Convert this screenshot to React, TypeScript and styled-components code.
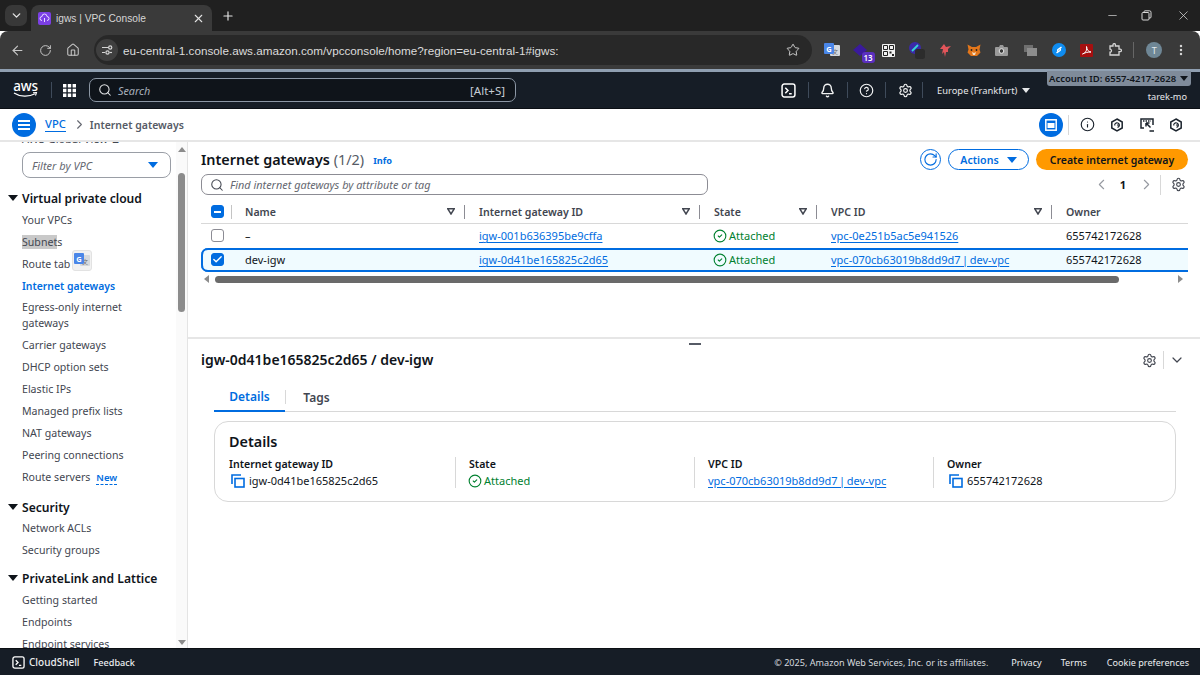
import React from "react";
import styled, { createGlobalStyle } from "styled-components";
import { ArrowLeft, RotateCw, House, Star, X, Plus, ChevronDown, ChevronLeft, ChevronRight, Minus, Search, Bell, CircleHelp, Settings, Info, EllipsisVertical, Check, CircleCheck } from "lucide-react";

const Global = createGlobalStyle`
  html, body { margin: 0; padding: 0; background: #fff; }
  * { box-sizing: border-box; }
  body { font-family: "Noto Sans", "Open Sans", sans-serif; }
`;

const Page = styled.div`
  width: 1200px; height: 675px; overflow: hidden; display: flex; flex-direction: column; color: #0f141a; position: relative;
`;

/* ---------- browser chrome ---------- */
const TabStrip = styled.div`
  height: 31px; background: #202020; display: flex; align-items: flex-end; padding-left: 5px; flex: none;
`;
const TabMenu = styled.div`
  width: 22px; height: 21px; margin: 0 4px 5px 0; border-radius: 7px; background: #383838; color: #e3e3e3;
  display: flex; align-items: center; justify-content: center;
`;
const Tab = styled.div`
  width: 181px; height: 26px; background: #3a3a3a; border-radius: 8px 8px 0 0; display: flex; align-items: center; padding: 0 7px;
  color: #d6d6d6; font-family: "Liberation Sans", sans-serif; font-size: 10.2px; gap: 5px;
`;
const TabTitle = styled.span` flex: 1; white-space: nowrap; `;
const NewTab = styled.div`
  margin: 0 0 5px 9px; width: 16px; height: 20px; display: flex; align-items: center; color: #e3e3e3;
`;
const WindowControls = styled.div`
  margin-left: auto; display: flex; height: 31px; align-items: center; color: #d8d8d8;
`;
const WindowButton = styled.div<{ $w: number }>`
  width: ${p => p.$w}px; display: flex; justify-content: center; align-items: center;
`;
const Toolbar = styled.div`
  height: 38px; background: #3a3a3a; display: flex; align-items: center; padding-left: 3px; flex: none; border-radius: 8px 8px 0 0;
`;
const NavButton = styled.div`
  width: 28px; display: flex; justify-content: center; color: #c7c7c7;
`;
const Omnibox = styled.div`
  margin-left: 7px; width: 718px; height: 30px; background: #282828; border-radius: 15px; display: flex; align-items: center; padding: 0 12px 0 2px;
`;
const SiteInfo = styled.div`
  width: 22px; height: 22px; border-radius: 50%; background: #3f3f3f; display: flex; align-items: center; justify-content: center; margin-right: 5px;
`;
const Url = styled.span`
  flex: 1; color: #dcdcdc; font-size: 11.7px; white-space: nowrap; font-family: "Liberation Sans", sans-serif;
`;
const Extensions = styled.div`
  margin-left: 6px; display: flex; align-items: center;
`;
const Ext = styled.div`
  width: 28.3px; height: 28px; display: flex; align-items: center; justify-content: center; position: relative;
`;
const ExtBadge = styled.span`
  position: absolute; right: 0; bottom: 1px; width: 13px; height: 11px; border-radius: 3px; background: #5b2fc0; color: #fff; font-size: 8px;
  line-height: 11px; text-align: center; font-weight: 600;
`;
const ExtSep = styled.div`
  width: 1px; height: 16px; background: #666; margin: 0 12px 0 4px;
`;
const Avatar = styled.div`
  width: 16px; height: 16px; border-radius: 50%; background: #6f8796; color: #e4eaee; font-size: 9px; display: flex; align-items: center; justify-content: center; margin-right: 12px;
`;
const LoadLine = styled.div` height: 3px; background: #8f9fb1; flex: none; `;

/* ---------- AWS header ---------- */
const AwsHeader = styled.header`
  height: 37px; background: #161d26; display: flex; align-items: center; flex: none; color: #fff; padding-left: 13px; position: relative; border-bottom: 1px solid #0b0f14;
`;
const AwsLogo = styled.div`
  width: 25px; display: flex; flex-direction: column; align-items: center; font-size: 13.5px; line-height: 12px; color: #fff; font-weight: 500; letter-spacing: -0.2px; margin-top: -2px;
`;
const HeadSep = styled.div<{ $m?: string }>`
  width: 1px; height: 16px; background: #3f4b5b; margin: ${p => p.$m ?? "0"};
`;
const AppGrid = styled.div`
  width: 18px; margin-left: 8px; display: flex; justify-content: center;
`;
const GlobalSearch = styled.div`
  width: 427px; height: 24px; margin-left: 11px; background: #0f141a; border: 1px solid #8c97a5; border-radius: 7px; display: flex; align-items: center; padding: 0 10px 0 8px; gap: 6px;
`;
const SearchHint = styled.span`
  flex: 1; font-style: italic; font-size: 10.8px; color: #a8b0ba;
`;
const Shortcut = styled.span` font-size: 11.5px; color: #c6ccd4; `;
const HeadIcon = styled.div<{ $m?: number }>`
  width: 18px; display: flex; justify-content: center; color: #f2f3f3; margin-left: ${p => p.$m ?? 0}px;
`;
const Region = styled.span`
  font-size: 9.4px; color: #e6e8ea; margin-left: 14px; white-space: nowrap; display: flex; align-items: center; gap: 5px;
`;
const Caret = styled.i<{ $c?: string; $s?: number }>`
  display: inline-block; width: 0; height: 0; border-left: ${p => p.$s ?? 4}px solid transparent; border-right: ${p => p.$s ?? 4}px solid transparent;
  border-top: ${p => (p.$s ?? 4) + 1}px solid ${p => p.$c ?? "currentColor"};
`;
const AccountBadge = styled.div`
  position: absolute; left: 1047px; top: -1px; width: 144px; height: 15px; background: #7f8b9a; color: #10151b; border-radius: 0 0 3px 3px;
  font-size: 9.5px; font-weight: 600; display: flex; align-items: center; padding-left: 2px; gap: 4px; white-space: nowrap;
`;
const UserName = styled.span`
  position: absolute; right: 13px; bottom: 5px; font-size: 9.2px; color: #e6e8ea;
`;

/* ---------- breadcrumb ---------- */
const Crumbs = styled.div`
  height: 33px; display: flex; align-items: center; padding-left: 12px; flex: none; border-bottom: 2px solid #e6e6e6; background: #fff;
`;
const RoundBlue = styled.div`
  width: 24px; height: 24px; border-radius: 50%; background: #006ce0; display: flex; align-items: center; justify-content: center; flex: none;
`;
const CrumbLink = styled.a`
  color: #006ce0; font-size: 11.2px; margin-left: 9px; border-bottom: 1px solid #006ce0; line-height: 14px; font-weight: 500;
`;
const CrumbChevron = styled.span`
  margin-left: 6px; display: flex; color: #656871;
`;
const CrumbCurrent = styled.span`
  color: #565b66; font-size: 10.5px; font-weight: 600; margin-left: 3px;
`;
const CrumbTools = styled.div`
  margin-left: auto; display: flex; align-items: center; padding-right: 9px;
`;
const ToolSep = styled.div`
  width: 1px; height: 20px; background: #d8d8d8; margin: 0 4px 0 5px;
`;
const ToolIcon = styled.div`
  width: 29.5px; display: flex; justify-content: center; color: #1b232d;
`;

/* ---------- body ---------- */
const Body = styled.div`
  flex: 1; min-height: 0; display: flex;
`;
const Sidebar = styled.aside`
  width: 188px; flex: none; display: flex; border-right: 1px solid #e4e4e4; overflow: hidden; background: #fff;
`;
const SideNav = styled.nav`
  width: 176px; flex: none; padding-left: 22px; height: 100%; overflow: hidden; position: relative;
`;
const ClippedTitle = styled.div`
  margin-top: -11px; height: 17px; font-size: 11px; color: #424650; line-height: 15px; white-space: nowrap;
`;
const FilterSelect = styled.div`
  width: 149px; height: 26px; margin-top: 4px; border: 1px solid #9a9ea6; border-radius: 8px; display: flex; align-items: center; justify-content: space-between; padding: 0 12px 0 9px;
  font-size: 11px; font-style: italic; color: #656871; background: #fff;
`;
const SectionTitle = styled.div<{ $top: number }>`
  position: relative; margin-top: ${p => p.$top}px; height: 21px; line-height: 21px; font-size: 12.1px; font-weight: 600; color: #0f141a; white-space: nowrap;
  & > i { position: absolute; left: -14px; top: 7px; }
`;
const NavItem = styled.div<{ $active?: boolean }>`
  font-size: ${p => p.$active ? "10.4px" : "10.6px"}; line-height: 16px; padding: 2.95px 0; color: ${p => p.$active ? "#006ce0" : "#424650"}; font-weight: ${p => p.$active ? 600 : 400}; position: relative; white-space: nowrap;
`;
const Selected = styled.span` background: #c9c9c9; `;
const NewTag = styled.span`
  color: #006ce0; font-size: 9.5px; font-weight: 600; margin-left: 6px; border-bottom: 1px dashed #006ce0;
`;
const TranslatePop = styled.div`
  position: absolute; left: 50px; top: -3px; width: 20px; height: 21px; border-radius: 3px; background: #f1f1f1; border: 1px solid #e2e2e2; display: flex; align-items: center; justify-content: center;
`;
const ScrollTrack = styled.div`
  width: 11px; flex: none; background: #fafafa; display: flex; flex-direction: column; align-items: center; position: relative; padding-top: 31px;
`;
const ScrollThumb = styled.div`
  width: 7px; height: 139px; background: #8c8c8c; border-radius: 4px;
`;
const ScrollUp = styled.i`
  position: absolute; top: 5px; width: 0; height: 0; border-left: 4px solid transparent; border-right: 4px solid transparent; border-bottom: 5px solid #8c8c8c;
`;
const ScrollDown = styled.i`
  position: absolute; bottom: 3px; width: 0; height: 0; border-left: 4px solid transparent; border-right: 4px solid transparent; border-top: 5px solid #8c8c8c;
`;

const Main = styled.main`
  flex: 1; min-width: 0; display: flex; flex-direction: column;
`;
const TopPane = styled.section`
  height: 197px; flex: none; padding: 7px 12px 0 13px; border-bottom: 2px solid #e6e6e6; position: relative;
`;
const TitleRow = styled.div`
  display: flex; align-items: center; height: 21px;
`;
const PageTitle = styled.h1<{ $size?: number }>`
  margin: 0 0 1px; font-size: ${p => p.$size ?? 14.4}px; font-weight: 600; color: #0f141a; white-space: nowrap;
`;
const Count = styled.span` font-weight: 400; color: #565b66; `;
const InfoLink = styled.a`
  font-size: 9.2px; font-weight: 700; color: #006ce0; margin-left: 9px; margin-top: 2px;
`;
const TitleActions = styled.div`
  margin-left: auto; display: flex; align-items: center; gap: 7px;
`;
const CircleBtn = styled.div`
  width: 21px; height: 21px; border: 1px solid #006ce0; border-radius: 50%; display: flex; align-items: center; justify-content: center; color: #006ce0;
`;
const OutlineBtn = styled.div`
  width: 81px; height: 21px; border: 1px solid #006ce0; border-radius: 11px; display: flex; align-items: center; justify-content: center; gap: 8px; color: #006ce0; font-size: 10.6px; font-weight: 600;
`;
const PrimaryBtn = styled.div`
  width: 152px; height: 21px; border-radius: 11px; background: #ff9900; display: flex; align-items: center; justify-content: center; color: #0f141a; font-size: 10.5px; font-weight: 600; white-space: nowrap;
`;
const FilterRow = styled.div`
  display: flex; align-items: center; margin-top: 4px; height: 21px;
`;
const TableSearch = styled.div`
  width: 507px; height: 21px; border: 1px solid #8c8c94; border-radius: 7px; display: flex; align-items: center; padding-left: 8px; gap: 6px; background: #fff;
`;
const TableHint = styled.span`
  font-size: 10.9px; font-style: italic; color: #656871; white-space: nowrap;
`;
const Pager = styled.div`
  margin-left: auto; display: flex; align-items: center; color: #969aa1; padding-right: 2px;
`;
const PageNum = styled.span`
  font-size: 11px; font-weight: 700; color: #0f141a; margin: 0 12px 0 10px;
`;
const PagerSep = styled.div`
  width: 1px; height: 20px; background: #d8d8d8; margin: 0 10px 0 5px;
`;
const PagerGear = styled.span` display: flex; color: #424650; `;

const TableGrid = styled.div`
  margin-top: 5px; overflow: hidden;
`;
const cols = "44px 234px 235px 117px 235px 122px";
const HeadRow = styled.div`
  display: grid; grid-template-columns: ${cols}; height: 24px; align-items: center; border-bottom: 1px solid #d8d8d8;
  font-size: 10.6px; font-weight: 600; color: #424650;
`;
const HeadCell = styled.div`
  display: flex; align-items: center; padding-right: 15px; white-space: nowrap;
`;
const CheckCell = styled.div`
  display: flex; align-items: center; padding-left: 10px;
`;
const Sort = styled.div`
  margin-left: auto; width: 8px; height: 7px; margin-right: 9px; display: flex;
`;
const ColSep = styled.div`
  width: 1px; height: 14px; background: #8c8c94; margin-right: -1px;
`;
const CheckSep = styled(ColSep)`
  margin-left: 7px; background: #c4c4c4;
`;
const Row = styled.div<{ $selected?: boolean }>`
  display: grid; grid-template-columns: ${cols}; height: 24px; align-items: center; font-size: 11px; color: #0f141a; white-space: nowrap; padding-bottom: 1px;
  background: ${p => p.$selected ? "#f0fbff" : "#fff"};
  border-radius: ${p => p.$selected ? "7px 0 0 7px" : "0"};
  box-shadow: ${p => p.$selected ? "inset 2px 0 0 #006ce0, inset 0 2px 0 #006ce0, inset 0 -2px 0 #006ce0" : "none"};
`;
const Box = styled.div<{ $on?: boolean }>`
  width: 13px; height: 13px; border-radius: 3px; background: ${p => p.$on ? "#006ce0" : "#fff"}; border: 1px solid ${p => p.$on ? "#006ce0" : "#8c8c94"};
  display: flex; align-items: center; justify-content: center; color: #fff; flex: none;
`;
const Dash = styled.i` width: 7px; height: 2px; background: #fff; display: block; `;
const Link = styled.a`
  color: #006ce0; text-decoration: underline; text-underline-offset: 1.5px; font-size: 11px; white-space: nowrap; word-spacing: -1.3px;
`;
const Status = styled.span`
  display: inline-flex; align-items: center; gap: 2px; color: #00802f; font-size: 11px; margin-left: -1px;
`;
const HScroll = styled.div`
  display: flex; align-items: center; height: 10px; margin-top: 2px;
`;
const HArrow = styled.i<{ $right?: boolean }>`
  width: 0; height: 0; border-top: 4px solid transparent; border-bottom: 4px solid transparent;
  ${p => p.$right ? "border-left: 5px solid #8c8c8c; margin-left: 59px;" : "border-right: 5px solid #8c8c8c; margin-left: 3px;"}
`;
const HThumb = styled.div`
  width: 904px; height: 7px; background: #6a6a6a; border-radius: 4px; margin-left: 6px;
`;
const Handle = styled.div`
  position: absolute; left: 501px; bottom: -8px; width: 12px; height: 2px; background: #565b66;
`;

const BottomPane = styled.section`
  flex: 1; padding: 9px 12px 0 13px;
`;
const PaneHead = styled.div`
  display: flex; align-items: center; height: 24px;
`;
const PaneTools = styled.div`
  margin-left: auto; display: flex; align-items: center; color: #424650; padding-right: 3px;
`;
const PaneSep = styled.div`
  width: 1px; height: 18px; background: #d8d8d8; margin: 0 5px 0 6px;
`;
const TabBar = styled.div`
  margin: 11px 0 0 13px; width: 962px; height: 29px; border-bottom: 1px solid #d8d8d8; display: flex;
`;
const DetailTab = styled.div<{ $active?: boolean }>`
  height: 29px; display: flex; align-items: center; justify-content: center; font-size: 12px; font-weight: 600; padding-bottom: 1px;
  width: ${p => p.$active ? "71px" : "61px"}; color: ${p => p.$active ? "#006ce0" : "#424650"};
  border-bottom: ${p => p.$active ? "2px solid #006ce0" : "none"};
`;
const TabDivider = styled.div`
  width: 1px; height: 14px; background: #d8d8d8; margin-top: 7px;
`;
const Card = styled.div`
  margin: 9px 0 0 13px; width: 962px; height: 81px; border: 1px solid #d8d8d8; border-radius: 14px; padding: 9px 14px 0;
`;
const CardTitle = styled.h2`
  margin: 0; font-size: 14.4px; font-weight: 600; line-height: 21px; color: #0f141a;
`;
const DetailGrid = styled.div`
  display: grid; grid-template-columns: 226px 239px 239px 1fr; margin-top: 5px;
`;
const DetailCol = styled.div<{ $first?: boolean }>`
  padding-left: ${p => p.$first ? 0 : 13}px; border-left: ${p => p.$first ? "none" : "1px solid #d8d8d8"}; height: 31px;
`;
const DetailLabel = styled.div`
  font-size: 10.6px; font-weight: 600; line-height: 15px; color: #0f141a;
`;
const DetailValue = styled.div`
  font-size: 11px; line-height: 16px; margin-top: 1px; display: flex; align-items: center; gap: 3px; color: #0f141a; white-space: nowrap;
`;
const CopyWrap = styled.span`
  display: inline-flex; margin: 0 1px 0 2px;
`;

const Footer = styled.footer`
  height: 27px; flex: none; background: #161d26; display: flex; align-items: center; padding: 0 11px 0 12px; color: #eceef0; font-size: 9.1px; border-top: 1px solid #0b0f14;
`;
const FootShell = styled.span`
  display: flex; align-items: center; gap: 4px; margin-right: 14px; font-weight: 500; font-size: 10px;
`;
const FootFeedback = styled.span` font-weight: 500; `;
const FootRight = styled.div`
  margin-left: auto; display: flex; align-items: center;
`;
const Copyright = styled.span` margin-right: 23px; color: #d5d9de; `;
const FootLink = styled.span<{ $m?: number }>` margin-left: ${p => p.$m ?? 0}px; `;

/* ---------- icons ---------- */
const TranslateIcon = ({ s = 16 }: { s?: number }) => (
  <svg width={s} height={s} viewBox="0 0 16 16">
    <rect x="6" y="3" width="10" height="11" rx="1" fill="#d6d9dd" />
    <text x="11" y="12" fontSize="6" fill="#666" textAnchor="middle" fontFamily="Noto Sans CJK SC">文</text>
    <rect x="0" y="1" width="10" height="11" rx="1" fill="#4a86e8" />
    <text x="5" y="9.5" fontSize="7.5" fontWeight="700" fill="#fff" textAnchor="middle" fontFamily="Noto Sans">G</text>
  </svg>
);
const CopyIcon = () => (
  <svg width="14" height="14" viewBox="0 0 14 14" fill="none" stroke="#006ce0" strokeWidth="1.6">
    <path d="M10 1H1v9" /><rect x="4" y="4.5" width="9" height="8.5" />
  </svg>
);
const HexDot = ({ s = 14 }: { s?: number }) => (
  <svg width={s} height={s} viewBox="0 0 14 14" fill="none" stroke="#1b232d" strokeWidth="1.5">
    <path d="M7 1l5.200 3v6L7 13l-5.200-3V4z" /><path d="M4.800 7.500A2.300 2.300 0 1 1 7.500 9.300" strokeWidth="1.200" /><path d="M7 7l2 .2" strokeWidth="1.200" />
  </svg>
);
const SortIcon = () => (
  <svg width="8" height="7" viewBox="0 0 8 7"><path d="M0.8 0.8h6.4L4 6z" fill="none" stroke="#424650" strokeWidth="1.5" /></svg>
);
const StatusIcon = () => <CircleCheck size={14} color="#00802f" strokeWidth={1.9} />;

const Attached = () => <Status><StatusIcon />Attached</Status>;

const Sec = ({ top, children }: { top: number; children: React.ReactNode }) => (
  <SectionTitle $top={top}><Caret $s={5} $c="#0f141a" />{children}</SectionTitle>
);

const Head = ({ children, last }: { children: React.ReactNode; last?: boolean }) => (
  <HeadCell>
    {children}
    {!last && <Sort><SortIcon /></Sort>}
    {!last && <ColSep />}
  </HeadCell>
);

export default function App() {
  return (
    <Page>
      <Global />
      <TabStrip>
        <TabMenu><ChevronDown size={13} strokeWidth={2.5} /></TabMenu>
        <Tab>
          <svg width="13" height="13" viewBox="0 0 13 13"><rect width="13" height="13" rx="2" fill="#7b3fe4" /><path d="M4 8.5a2 2 0 0 1 0-4 2.5 2.5 0 0 1 5 0 2 2 0 0 1 0 4M6.5 6v4" fill="none" stroke="#e8dcff" strokeWidth="1" /></svg>
          <TabTitle>igws | VPC Console</TabTitle>
          <X size={13} strokeWidth={2} color="#e3e3e3" />
        </Tab>
        <NewTab><Plus size={14} strokeWidth={2} /></NewTab>
        <WindowControls>
          <WindowButton $w={28}><Minus size={13} strokeWidth={1.3} /></WindowButton>
          <WindowButton $w={40}>
            <svg width="11" height="11" viewBox="0 0 11 11" fill="none" stroke="#d8d8d8"><rect x="1" y="2.5" width="7" height="7.5" rx="1" /><path d="M3 2.500V1.800a1 1 0 0 1 1-1h4.500a1.500 1.500 0 0 1 1.500 1.500V7a1 1 0 0 1-1 1H8" /></svg>
          </WindowButton>
          <WindowButton $w={34}><X size={15} strokeWidth={1.2} /></WindowButton>
        </WindowControls>
      </TabStrip>

      <Toolbar>
        <NavButton><ArrowLeft size={15} strokeWidth={1.8} /></NavButton>
        <NavButton><RotateCw size={13} strokeWidth={1.8} /></NavButton>
        <NavButton><House size={14} strokeWidth={1.8} /></NavButton>
        <Omnibox>
          <SiteInfo>
            <svg width="12" height="12" viewBox="0 0 12 12" fill="none" stroke="#d5d5d5" strokeWidth="1.2"><path d="M1 3.500h6M1 8.500h3" /><circle cx="9.200" cy="3.500" r="1.600" /><circle cx="6.500" cy="8.500" r="1.600" /><path d="M8.500 8.500H11" /></svg>
          </SiteInfo>
          <Url>eu-central-1.console.aws.amazon.com/vpcconsole/home?region=eu-central-1#igws:</Url>
          <Star size={14} color="#d5d5d5" strokeWidth={1.6} />
        </Omnibox>
        <Extensions>
          <Ext><TranslateIcon s={16} /></Ext>
          <Ext>
            <svg width="14" height="12" viewBox="0 0 14 12"><path d="M7 0l7 6-7 6-7-6z" fill="#3a1a9c" /></svg>
            <ExtBadge>13</ExtBadge>
          </Ext>
          <Ext>
            <svg width="13" height="13" viewBox="0 0 13 13"><rect width="13" height="13" rx="1" fill="#f1f1f1" /><path d="M1.500 1.500h4v4h-4zM7.500 1.500h4v4h-4zM1.500 7.500h4v4h-4z" fill="none" stroke="#222" /><path d="M7.500 7.500h2v2h-2zM10 10h2v2h-2z" fill="#222" /></svg>
          </Ext>
          <Ext>
            <svg width="20" height="20" viewBox="0 0 20 20"><circle cx="8" cy="8" r="6" fill="#3b2aa8" /><path d="M5 11l6-6" stroke="#35d6d6" strokeWidth="1.8" /><rect x="8" y="9" width="10" height="10" rx="2.500" fill="#2c2c2c" /></svg>
          </Ext>
          <Ext>
            <svg width="13" height="15" viewBox="0 0 13 15"><path d="M5 1l2 3 5-1-3 3 0 3-2 0-1 5-1-5-2 2 1-5-3 0z" fill="#e2555a" /></svg>
          </Ext>
          <Ext>
            <svg width="14" height="13" viewBox="0 0 14 13"><path d="M0.500 0.500L5 3h4l4.500-2.500-1 5 1 3L10 12H4L.5 8.500l1-3z" fill="#e2761b" /><path d="M5 8l2 1 2-1-1 3H6z" fill="#f5e1c9" /><circle cx="4.500" cy="6" r=".9" fill="#222" /><circle cx="9.500" cy="6" r=".9" fill="#222" /></svg>
          </Ext>
          <Ext>
            <svg width="13" height="11" viewBox="0 0 13 11"><path d="M1 2h3l1-2h3l1 2h3a1 1 0 0 1 1 1v7a1 1 0 0 1-1 1H1a1 1 0 0 1-1-1V3a1 1 0 0 1 1-1z" fill="#9a9a9a" /><circle cx="6.500" cy="6" r="2.300" fill="#3a3a3a" stroke="#e8e8e8" /></svg>
          </Ext>
          <Ext>
            <svg width="13" height="11" viewBox="0 0 13 11"><rect width="9" height="7" y="0" fill="#6f6f6f" /><rect x="3" y="3" width="10" height="8" fill="#8d8d8d" /></svg>
          </Ext>
          <Ext>
            <svg width="14" height="14" viewBox="0 0 14 14"><circle cx="7" cy="7" r="7" fill="#0f8cf0" /><path d="M9.500 4.200L6 6.500a1 1 0 0 0 0 1.500M4.500 9.800L8 7.500a1 1 0 0 0 0-1.500" fill="none" stroke="#fff" strokeWidth="1.400" /></svg>
          </Ext>
          <Ext>
            <svg width="13" height="13" viewBox="0 0 13 13"><rect width="13" height="13" rx="1" fill="#a50f0f" /><path d="M2.500 10c3-1 5-4 4-7.500 0 3 2 5.500 4.500 5.500-3 0-6 .5-8.500 2z" fill="none" stroke="#fff" strokeWidth="1" /></svg>
          </Ext>
          <Ext>
            <svg width="14" height="14" viewBox="0 0 14 14" fill="none" stroke="#d5d5d5" strokeWidth="1.300"><path d="M2 3h3V1.800a1.200 1.200 0 0 1 2.400 0V3h3.600v3.200h1.200a1.200 1.200 0 0 1 0 2.400H11V12H2V9.200a1.500 1.500 0 0 0 0-3z" /></svg>
          </Ext>
          <ExtSep />
          <Avatar>T</Avatar>
          <EllipsisVertical size={14} color="#d5d5d5" strokeWidth={2.2} />
        </Extensions>
      </Toolbar>
      <LoadLine />

      <AwsHeader>
        <AwsLogo>
          aws
          <svg width="25" height="6" viewBox="0 0 25 6"><path d="M1 1c6 4 15 4 21 .8" fill="none" stroke="#fff" strokeWidth="1.200" /><path d="M20 .8l3.500-.3-1 3" fill="none" stroke="#fff" strokeWidth="1.100" /></svg>
        </AwsLogo>
        <HeadSep $m="0 0 0 13px" />
        <AppGrid>
          <svg width="13" height="13" viewBox="0 0 13 13" fill="#fff"><path d="M0 0h3.400v3.400H0zM4.800 0h3.400v3.400H4.800zM9.600 0H13v3.400H9.600zM0 4.800h3.400v3.400H0zM4.800 4.800h3.400v3.400H4.800zM9.600 4.800H13v3.400H9.600zM0 9.600h3.400V13H0zM4.800 9.600h3.400V13H4.800zM9.600 9.600H13V13H9.600z" /></svg>
        </AppGrid>
        <GlobalSearch>
          <Search size={14} color="#e6e8ea" strokeWidth={1.8} />
          <SearchHint>Search</SearchHint>
          <Shortcut>[Alt+S]</Shortcut>
        </GlobalSearch>
        <HeadIcon $m={263}>
          <svg width="15" height="15" viewBox="0 0 14 14" fill="none" stroke="#fff" strokeWidth="1.400"><rect x="1" y="1" width="12" height="12" rx="2" /><path d="M4 4.500L6.500 7 4 9.500M7.500 10H10" /></svg>
        </HeadIcon>
        <HeadSep $m="0 9px 0 11px" />
        <HeadIcon><Bell size={15} strokeWidth={2.2} /></HeadIcon>
        <HeadSep $m="0 9px 0 11px" />
        <HeadIcon><CircleHelp size={15} strokeWidth={1.9} /></HeadIcon>
        <HeadSep $m="0 10px 0 10px" />
        <HeadIcon><Settings size={15} strokeWidth={1.9} /></HeadIcon>
        <HeadSep $m="0 0 0 8px" />
        <Region>Europe (Frankfurt)<Caret /></Region>
        <AccountBadge>Account ID: 6557-4217-2628 <Caret $c="#10151b" /></AccountBadge>
        <UserName>tarek-mo</UserName>
      </AwsHeader>

      <Crumbs>
        <RoundBlue>
          <svg width="12" height="10" viewBox="0 0 12 10" stroke="#fff" strokeWidth="1.800"><path d="M0 1h12M0 5h12M0 9h12" /></svg>
        </RoundBlue>
        <CrumbLink>VPC</CrumbLink>
        <CrumbChevron><ChevronRight size={15} strokeWidth={1.8} /></CrumbChevron>
        <CrumbCurrent>Internet gateways</CrumbCurrent>
        <CrumbTools>
          <RoundBlue>
            <svg width="12" height="12" viewBox="0 0 12 12"><rect x=".8" y=".8" width="10.400" height="10.400" fill="none" stroke="#fff" strokeWidth="1.500" /><rect x="2.500" y="4" width="7" height="5" fill="#fff" /></svg>
          </RoundBlue>
          <ToolSep />
          <ToolIcon><Info size={15} strokeWidth={1.8} /></ToolIcon>
          <ToolIcon><HexDot /></ToolIcon>
          <ToolIcon>
            <svg width="14" height="14" viewBox="0 0 14 14" fill="none" stroke="#1b232d" strokeWidth="1.500"><path d="M4 10H1V1h12v6" /><path d="M3 3h8" strokeDasharray="1.500 1" /><path d="M6 5l4.500 4.500M6 5v3.500M6 5h3.500M9.500 13H14" /></svg>
          </ToolIcon>
          <ToolIcon><HexDot /></ToolIcon>
        </CrumbTools>
      </Crumbs>

      <Body>
        <Sidebar>
          <SideNav>
            <ClippedTitle>AWS Global View ⧉</ClippedTitle>
            <FilterSelect>Filter by VPC <Caret $s={5} $c="#006ce0" /></FilterSelect>
            <Sec top={10}>Virtual private cloud</Sec>
            <NavItem>Your VPCs</NavItem>
            <NavItem><Selected>Subnet</Selected>s</NavItem>
            <NavItem>Route tab<TranslatePop><TranslateIcon s={16} /></TranslatePop></NavItem>
            <NavItem $active>Internet gateways</NavItem>
            <NavItem>Egress-only internet<br />gateways</NavItem>
            <NavItem>Carrier gateways</NavItem>
            <NavItem>DHCP option sets</NavItem>
            <NavItem>Elastic IPs</NavItem>
            <NavItem>Managed prefix lists</NavItem>
            <NavItem>NAT gateways</NavItem>
            <NavItem>Peering connections</NavItem>
            <NavItem>Route servers<NewTag>New</NewTag></NavItem>
            <Sec top={8}>Security</Sec>
            <NavItem>Network ACLs</NavItem>
            <NavItem>Security groups</NavItem>
            <Sec top={7}>PrivateLink and Lattice</Sec>
            <NavItem>Getting started</NavItem>
            <NavItem>Endpoints</NavItem>
            <NavItem>Endpoint services</NavItem>
          </SideNav>
          <ScrollTrack><ScrollUp /><ScrollThumb /><ScrollDown /></ScrollTrack>
        </Sidebar>

        <Main>
          <TopPane>
            <TitleRow>
              <PageTitle>Internet gateways <Count>(1/2)</Count></PageTitle>
              <InfoLink>Info</InfoLink>
              <TitleActions>
                <CircleBtn><RotateCw size={15} strokeWidth={1.8} /></CircleBtn>
                <OutlineBtn>Actions <Caret $s={5} /></OutlineBtn>
                <PrimaryBtn>Create internet gateway</PrimaryBtn>
              </TitleActions>
            </TitleRow>
            <FilterRow>
              <TableSearch><Search size={14} color="#424650" strokeWidth={1.8} /><TableHint>Find internet gateways by attribute or tag</TableHint></TableSearch>
              <Pager>
                <ChevronLeft size={17} strokeWidth={1.6} />
                <PageNum>1</PageNum>
                <ChevronRight size={17} strokeWidth={1.6} />
                <PagerSep />
                <PagerGear><Settings size={15} strokeWidth={1.8} /></PagerGear>
              </Pager>
            </FilterRow>
            <TableGrid>
              <HeadRow>
                <CheckCell><Box $on><Dash /></Box><CheckSep /></CheckCell>
                <Head>Name</Head>
                <Head>Internet gateway ID</Head>
                <Head>State</Head>
                <Head>VPC ID</Head>
                <Head last>Owner</Head>
              </HeadRow>
              <Row>
                <CheckCell><Box /></CheckCell>
                <span>–</span>
                <Link>igw-001b636395be9cffa</Link>
                <Attached />
                <Link>vpc-0e251b5ac5e941526</Link>
                <span>655742172628</span>
              </Row>
              <Row $selected>
                <CheckCell><Box $on><Check size={11} strokeWidth={3} /></Box></CheckCell>
                <span>dev-igw</span>
                <Link>igw-0d41be165825c2d65</Link>
                <Attached />
                <Link>vpc-070cb63019b8dd9d7 | dev-vpc</Link>
                <span>655742172628</span>
              </Row>
            </TableGrid>
            <HScroll><HArrow /><HThumb /><HArrow $right /></HScroll>
            <Handle />
          </TopPane>

          <BottomPane>
            <PaneHead>
              <PageTitle $size={14}>igw-0d41be165825c2d65 / dev-igw</PageTitle>
              <PaneTools>
                <Settings size={15} strokeWidth={1.8} />
                <PaneSep />
                <ChevronDown size={16} strokeWidth={1.8} />
              </PaneTools>
            </PaneHead>
            <TabBar>
              <DetailTab $active>Details</DetailTab>
              <TabDivider />
              <DetailTab>Tags</DetailTab>
            </TabBar>
            <Card>
              <CardTitle>Details</CardTitle>
              <DetailGrid>
                <DetailCol $first>
                  <DetailLabel>Internet gateway ID</DetailLabel>
                  <DetailValue><CopyWrap><CopyIcon /></CopyWrap>igw-0d41be165825c2d65</DetailValue>
                </DetailCol>
                <DetailCol>
                  <DetailLabel>State</DetailLabel>
                  <DetailValue><Attached /></DetailValue>
                </DetailCol>
                <DetailCol>
                  <DetailLabel>VPC ID</DetailLabel>
                  <DetailValue><Link>vpc-070cb63019b8dd9d7 | dev-vpc</Link></DetailValue>
                </DetailCol>
                <DetailCol>
                  <DetailLabel>Owner</DetailLabel>
                  <DetailValue><CopyWrap><CopyIcon /></CopyWrap>655742172628</DetailValue>
                </DetailCol>
              </DetailGrid>
            </Card>
          </BottomPane>
        </Main>
      </Body>

      <Footer>
        <FootShell>
          <svg width="13" height="13" viewBox="0 0 14 14" fill="none" stroke="#fff" strokeWidth="1.400"><rect x="1" y="1" width="12" height="12" rx="2" /><path d="M4 4.500L6.500 7 4 9.500M7.500 10H10" /></svg>
          CloudShell
        </FootShell>
        <FootFeedback>Feedback</FootFeedback>
        <FootRight>
          <Copyright>© 2025, Amazon Web Services, Inc. or its affiliates.</Copyright>
          <FootLink>Privacy</FootLink>
          <FootLink $m={19}>Terms</FootLink>
          <FootLink $m={20}>Cookie preferences</FootLink>
        </FootRight>
      </Footer>
    </Page>
  );
}
